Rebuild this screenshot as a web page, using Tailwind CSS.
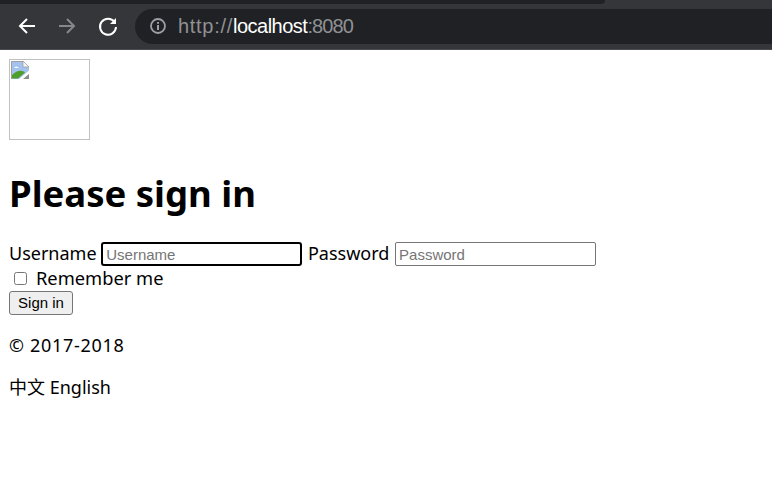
<!DOCTYPE html>
<html lang="zh">
<head>
  <meta charset="UTF-8" />
  <title>Please sign in</title>
  <script src="https://cdn.jsdelivr.net/npm/@tailwindcss/browser@4"></script>
</head>
<body class="bg-white text-black font-['Noto_Sans','Noto_Sans_CJK_SC',sans-serif] text-[18px] overflow-hidden">
  <!-- Browser toolbar -->
  <div class="h-[50px] bg-[#35363a] border-b border-[#4a4b4f] overflow-hidden">
    <div class="h-1 w-[605px] bg-[#202124] rounded-br-md"></div>
    <div class="flex items-center h-[36px] mt-[4px]">
      <div class="flex items-center gap-[18px] pl-[16px] w-[135px]">
        <svg viewBox="0 0 22 22" class="w-[22px] h-[22px]" fill="none" stroke="#fff" stroke-width="2"><path d="M19 11H4M11 4l-7 7 7 7" /></svg>
        <svg viewBox="0 0 22 22" class="w-[22px] h-[22px]" fill="none" stroke="#86878a" stroke-width="2"><path d="M3 11h15M11 4l7 7-7 7" /></svg>
        <svg viewBox="0 0 22 22" class="w-[22px] h-[22px] ml-[1px]" fill="none" stroke="#fff" stroke-width="2"><path d="M17.5 7A8 8 0 1 0 19 12" /><path d="M19 3v6h-6" fill="#fff" stroke="none" /></svg>
      </div>
      <div class="flex-1 h-[35px] bg-[#202124] rounded-l-full flex items-center pl-[14px] gap-[11px] font-['Liberation_Sans',sans-serif] text-[20px] text-[#8f9194]">
        <svg viewBox="0 0 18 18" class="w-[18px] h-[18px]" fill="none" stroke="#9aa0a6"><circle cx="9" cy="9" r="7" stroke-width="1.8" /><path d="M9 8v5M9 5v1.8" stroke-width="2" /></svg>
        <span><span class="tracking-[0.7px]">http://</span><span class="text-white tracking-[-0.5px]">localhost</span><span class="tracking-[-0.9px]">:8080</span></span>
      </div>
    </div>
  </div>

  <div class="px-[9px] pt-[9px]">
    <!-- Broken image placeholder -->
    <div class="w-[81px] h-[81px] border border-[#c0c0c0] p-[1px]">
      <svg viewBox="0 0 18 18" class="w-[18px] h-[18px]">
        <path d="M0 0h12l6 6v12H0z" fill="#a3c2ee" />
        <path d="M.5 18V.5H12" fill="none" stroke="#a0a0a0" />
        <path d="M12 0l6 6h-6z" fill="#f4f4f4" stroke="#999" stroke-width="0.7" />
        <path d="M1 17.5V14q6-6 12-3.5l1 1-7 6z" fill="#4f9e2c" />
        <path d="M8 18l10-8.500V18z" fill="#ffffff" />
        <path d="M12 18l6-5v5z" fill="#8a8f8a" />
        <path d="M3 7q2-3 5 0h-5z" fill="#fff" />
      </svg>
    </div>

    <h1 class="text-[36.5px] font-bold leading-[50px] mt-[28px] mb-[23px]">Please sign in</h1>

    <form>
      <div class="leading-[25px] h-[25px]">
        <label>Username</label>
        <input type="text" placeholder="Username" class="w-[201px] h-[24px] mb-[2px] border-2 border-black rounded-[3px] px-[3px] text-[15px] font-['Liberation_Sans',sans-serif] placeholder:text-[#757575] align-middle" />
        <label class="ml-[1px] mr-[1px]">Password</label>
        <input type="password" placeholder="Password" class="w-[201px] h-[24px] mb-[2px] border border-[#767676] rounded-[2px] px-[3px] text-[15px] font-['Liberation_Sans',sans-serif] placeholder:text-[#757575] align-middle" />
      </div>
      <div class="flex items-center h-[25px]">
        <input type="checkbox" class="w-[13px] h-[13px] ml-[5px] mr-[9px]" />
        <span class="text-[18.3px] leading-[23px] mb-[2px]">Remember me</span>
      </div>
      <button type="button" class="block w-[64px] h-[24px] bg-[#efefef] border border-[#767676] rounded-[3px] text-[15px] font-['Liberation_Sans',sans-serif]">Sign in</button>
    </form>

    <p class="mt-[17px] leading-[26px] tracking-[0.7px]">© 2017-2018</p>
    <p class="mt-[16px] leading-[26px]">中文 English</p>
  </div>
</body>
</html>
